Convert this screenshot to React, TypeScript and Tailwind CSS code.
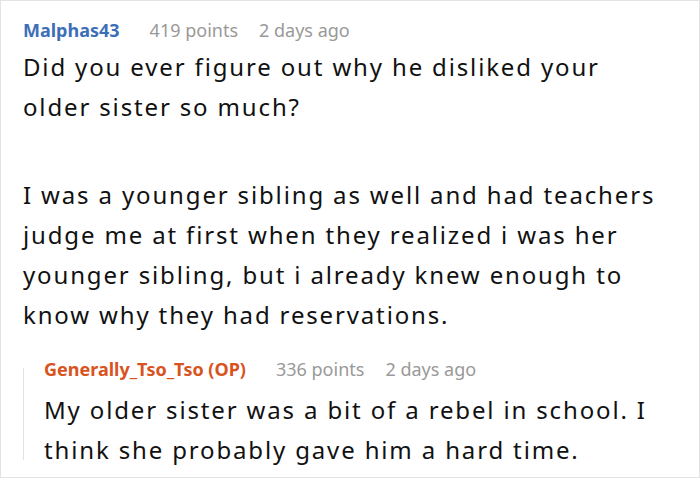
import React from 'react';

const metaFont = { fontFamily: '"Noto Sans", "Open Sans", sans-serif' };
const bodyFont = { fontFamily: '"Noto Sans", "Open Sans", sans-serif' };

const Meta = ({ name, color, points, ago }: { name: string; color: string; points: number; ago: string }) => (
  <div className="flex items-baseline text-[18px] leading-[24px] whitespace-nowrap" style={metaFont}>
    <span className={`font-bold ${color}`}>{name}</span>
    <span className="ml-[30px] text-[#999999]">{points} points</span>
    <span className="ml-[21px] text-[#999999]">{ago}</span>
  </div>
);

export default function App() {
  return (
    <div className="w-[700px] h-[478px] bg-white border border-[#e3e3e3] overflow-hidden">
      <div className="pl-[22px] pt-[17px] pr-[20px]">
        <Meta name="Malphas43" color="text-[#3d6fb8]" points={419} ago="2 days ago" />
        <div className="text-[24px] leading-[40px] tracking-[1.85px] text-[#111111] mt-[5px]" style={bodyFont}>
          <p>
            Did you ever figure out why he disliked your
            <br />
            older sister so much?
          </p>
          <p className="mt-[48px]">
            I was a younger sibling as well and had teachers judge me at first when they realized i was her younger
            sibling, but i already knew enough to know why they had reservations.
          </p>
        </div>

        {/* reply */}
        <div className="flex mt-[22px]">
          <div className="w-px bg-[#e3e3e3] mt-[11px] mb-[10px] shrink-0" />
          <div className="pl-[20px]">
            <Meta name="Generally_Tso_Tso (OP)" color="text-[#d9531e]" points={336} ago="2 days ago" />
            <p className="text-[24px] leading-[40px] tracking-[1.85px] text-[#111111] mt-[9px]" style={bodyFont}>
              My older sister was a bit of a rebel in school. I think she probably gave him a hard time.
            </p>
          </div>
        </div>
      </div>
    </div>
  );
}
